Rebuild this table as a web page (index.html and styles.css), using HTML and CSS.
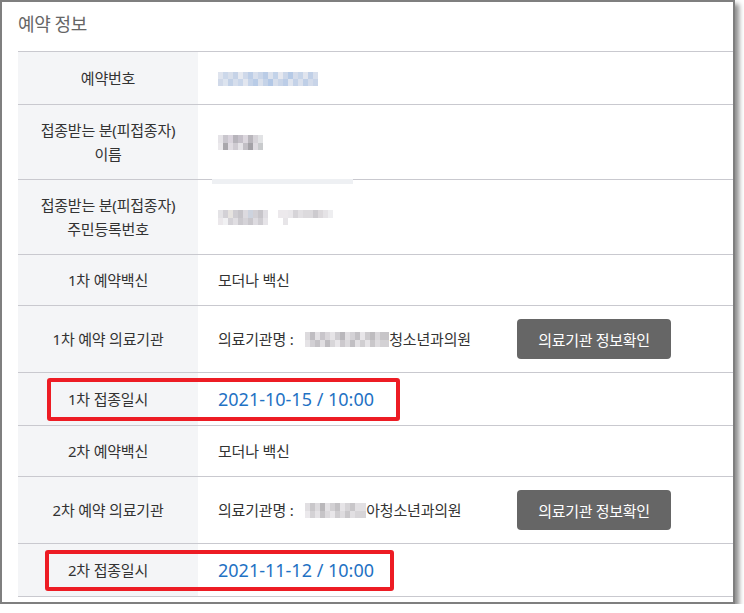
FILE: index.html
```html
<!DOCTYPE html>
<html lang="ko">
<head>
  <meta charset="UTF-8">
  <title>예약 정보</title>
  <link rel="stylesheet" href="styles.css">
</head>
<body>

<div class="panel">
  <h2 class="panel-title">예약 정보</h2>

  <table class="info">
    <tr class="row-tall">
      <th>예약번호</th>
      <td><span class="blur blur-no"></span></td>
    </tr>
    <tr>
      <th>접종받는 분(피접종자)<br>이름</th>
      <td><span class="blur blur-name"></span></td>
    </tr>
    <tr>
      <th>접종받는 분(피접종자)<br>주민등록번호</th>
      <td><span class="blur blur-rrn"></span><span class="blur blur-rrn2"></span></td>
    </tr>
    <tr>
      <th>1차 예약백신</th>
      <td>모더나 백신</td>
    </tr>
    <tr>
      <th>1차 예약 의료기관</th>
      <td>
        <div class="org">
          <span class="org-name">의료기관명 : <span class="blur blur-org1"></span>청소년과의원</span>
          <button class="org-btn">의료기관 정보확인</button>
        </div>
      </td>
    </tr>
    <tr class="row-tall">
      <th>1차 접종일시</th>
      <td class="date">2021-10-15 / 10:00</td>
    </tr>
    <tr>
      <th>2차 예약백신</th>
      <td>모더나 백신</td>
    </tr>
    <tr>
      <th>2차 예약 의료기관</th>
      <td>
        <div class="org">
          <span class="org-name">의료기관명 : <span class="blur blur-org2"></span>아청소년과의원</span>
          <button class="org-btn">의료기관 정보확인</button>
        </div>
      </td>
    </tr>
    <tr class="row-tall">
      <th>2차 접종일시</th>
      <td class="date">2021-11-12 / 10:00</td>
    </tr>
  </table>

  <!-- annotation boxes drawn over the screenshot -->
  <div class="smudge"></div>
  <div class="mark mark-first"></div>
  <div class="mark mark-second"></div>
</div>

</body>
</html>
```

FILE: styles.css
```css
body {
  margin: 0;
  background: #fff;
  font-family: "Noto Sans", "Noto Sans CJK KR", sans-serif;
  color: #333;
}
.panel {
  position: relative;
  width: 715px;
  height: 600px;
  padding-left: 16px;
  border: 2px solid #7f7f7f;
  background: #fff;
  overflow: hidden;
  box-shadow: 4px 4px 5px rgba(0,0,0,0.45);
}
.panel-title {
  margin: 0 0 15px;
  padding-top: 10px;
  font-size: 18px;
  line-height: 24px;
  font-weight: normal;
  color: #666;
  letter-spacing: -0.4px;
}
.info {
  width: 715px;
  border-collapse: collapse;
  table-layout: fixed;
}
.info th, .info td {
  border-top: 1px solid #c9c9cf;
  border-bottom: 1px solid #c9c9cf;
  padding: 13px 0;
  font-size: 15px;
  line-height: 24px;
  letter-spacing: -0.2px;
  vertical-align: middle;
}
.info th {
  width: 180px;
  background: #f4f5f7;
  font-weight: normal;
  text-align: center;
  color: #333;
}
.info td {
  padding-left: 20px;
  text-align: left;
  color: #333;
}
.row-tall th, .row-tall td {
  line-height: 26px;
}
.info td.date {
  font-size: 18px;
  letter-spacing: 0;
  color: #1f72c4;
}
.org {
  display: flex;
  align-items: center;
}
.org-name {
  width: 299px;
  flex-shrink: 0;
}
.org-btn {
  width: 154px;
  height: 40px;
  border: none;
  border-radius: 4px;
  background: #666;
  color: #fff;
  font-family: inherit;
  font-size: 15px;
  letter-spacing: -0.3px;
  cursor: pointer;
}

/* pixelated (blurred) personal data */
.blur {
  display: inline-block;
  height: 15px;
  vertical-align: middle;
  background-repeat: no-repeat;
}
.blur-no {
  width: 100px;
  height: 14px;
  margin-top: -2px;
  background-image:
    linear-gradient(90deg, #dfe4ee 0 5px, #ccd8ea 5px 10px, #d8dfeb 10px 15px, #c6d3e7 15px 20px, #e6e9f0 20px 25px, #cfd9ea 25px 30px, #bdcee7 30px 35px, #d8dfec 35px 40px, #cad6e9 40px 45px, #bacce6 45px 50px, #dce2ed 50px 55px, #c3d3e9 55px 60px, #e6e8ef 60px 65px, #ccd7e9 65px 70px, #b6cae6 70px 75px, #d5dcea 75px 80px, #c7d5e9 80px 85px, #e1e5ee 85px 90px, #c1d0e7 90px 95px, #d8dfec 95px 100px),
    linear-gradient(90deg, #d0d9e9 0 5px, #dde4ef 5px 10px, #c2d1e7 10px 15px, #d6deec 15px 20px, #c9d6ea 20px 25px, #e2e6ef 25px 30px, #c6d4e9 30px 35px, #b9cce7 35px 40px, #dbe1ec 40px 45px, #c5d3e8 45px 50px, #b3c8e6 50px 55px, #d7deeb 55px 60px, #c9d5e8 60px 65px, #bccde7 65px 70px, #dfe4ee 70px 75px, #c4d2e8 75px 80px, #dae0ec 80px 85px, #bfcfe7 85px 90px, #d3dbea 90px 95px, #c8d4e8 95px 100px);
  background-size: 100% 7px, 100% 7px;
  background-position: 0 0, 0 7px;
}
.blur-name {
  width: 45px;
  margin-top: -3px;
  background-image:
    linear-gradient(90deg, #e6e4e8 0 5px, #c9c6cd 5px 10px, #d9d3dc 10px 15px, #b7b4bb 15px 20px, #c5c0c9 20px 25px, #dcd7de 25px 30px, #b9b6bc 30px 35px, #d6d3d8 35px 40px, #e2e3e5 40px 45px),
    linear-gradient(90deg, #ebe9ec 0 5px, #a9a7ac 5px 10px, #e1dde3 10px 15px, #cfcbd2 15px 20px, #e5e3e7 20px 25px, #c2bfc5 25px 30px, #a3a1a6 30px 35px, #dedbe0 35px 40px, #c9cbcd 40px 45px);
  background-size: 100% 8px, 100% 7px;
  background-position: 0 0, 0 8px;
}
.blur-rrn {
  width: 50px;
  margin-top: -3px;
  background-image:
    linear-gradient(90deg, #e4e3e6 0 5px, #d3d1d6 5px 10px, #e6e3e0 10px 15px, #cfcdd2 15px 20px, #c6c4c9 20px 25px, #dcdadf 25px 30px, #cdd3de 30px 35px, #d2d0d5 35px 40px, #c7c5ca 40px 45px, #e0dee3 45px 50px),
    linear-gradient(90deg, #ebe8eb 0 5px, #f1f1f3 5px 10px, #d4d2d7 10px 15px, #e0dee2 15px 20px, #cbc9ce 20px 25px, #d5d3d8 25px 30px, #c9c7cc 30px 35px, #dddbe0 35px 40px, #cfcdd2 40px 45px, #e6e4e8 45px 50px);
  background-size: 100% 8px, 100% 7px;
  background-position: 0 0, 0 8px;
}
.blur-rrn2 {
  width: 60px;
  margin-left: 5px;
  margin-top: -3px;
  background-image:
    linear-gradient(90deg, #fff 0 5px, #ece9ec 5px 15px, #e9e7ea 15px 20px, #d6d4d8 20px 25px, #e2e0e3 25px 30px, #dcdadd 30px 40px, #cdcbcf 40px 45px, #dcd9dc 45px 50px, #e5e3e6 50px 55px, #eeeef0 55px 60px),
    linear-gradient(90deg, #fff 0 10px, #e7e5e8 10px 15px, #fff 15px 60px);
  background-size: 100% 8px, 100% 7px;
  background-position: 0 0, 0 8px;
}
.blur-org1 {
  width: 84px;
  margin: -3px 0 0 8px;
  background-image:
    linear-gradient(90deg, #dcdadd 0 5px, #bfbdc1 5px 10px, #e3e1e4 10px 15px, #c8c5ca 15px 20px, #d9d6da 20px 25px, #e6e4e7 25px 30px, #cfcdd1 30px 35px, #b9b7bb 35px 40px, #e1dfe2 40px 45px, #d4d2d6 45px 50px, #c3c1c5 50px 55px, #e8e6e9 55px 60px, #cdcbce 60px 65px, #bebcbf 65px 70px, #dad8db 70px 75px, #c7c5c8 75px 84px),
    linear-gradient(90deg, #e5e3e6 0 5px, #d2d0d4 5px 10px, #c4c2c6 10px 15px, #e0dee1 15px 20px, #bebcc0 20px 25px, #d8d6d9 25px 30px, #e9e7ea 30px 35px, #ccc9cd 35px 40px, #dcdadd 40px 45px, #c1bfc3 45px 50px, #e3e1e4 50px 55px, #d0ced1 55px 60px, #e6e4e7 60px 65px, #c9c7ca 65px 70px, #dedcdf 70px 75px, #d3d1d4 75px 84px);
  background-size: 100% 8px, 100% 7px;
  background-position: 0 0, 0 8px;
}
.blur-org2 {
  width: 61px;
  margin: -3px 0 0 8px;
  background-image:
    linear-gradient(90deg, #e1dfe2 0 5px, #c9c7ca 5px 10px, #dddbde 10px 15px, #b9b7ba 15px 20px, #e4e2e5 20px 25px, #d2d0d3 25px 30px, #c3c1c4 30px 35px, #e6e4e7 35px 40px, #d6d4d7 40px 45px, #c8c6c9 45px 50px, #e2e0e3 50px 61px),
    linear-gradient(90deg, #ebe9ec 0 5px, #d4d2d5 5px 10px, #e5e3e6 10px 15px, #c6c4c7 15px 20px, #dcdadd 20px 25px, #e8e6e9 25px 30px, #cfcdd0 30px 35px, #dedcdf 35px 40px, #c9c7ca 40px 45px, #e1dfe2 45px 50px, #d7d5d8 50px 61px);
  background-size: 100% 8px, 100% 7px;
  background-position: 0 0, 0 8px;
}
.smudge {
  position: absolute;
  left: 210px;
  top: 177px;
  width: 141px;
  height: 5px;
  background: #eef0f3;
}
.mark {
  position: absolute;
  box-sizing: border-box;
  border: 4px solid #ed1c24;
  border-radius: 3px;
}
.mark-first {
  left: 45px;
  top: 376px;
  width: 353px;
  height: 43px;
}
.mark-second {
  left: 43px;
  top: 548px;
  width: 349px;
  height: 41px;
}
```
